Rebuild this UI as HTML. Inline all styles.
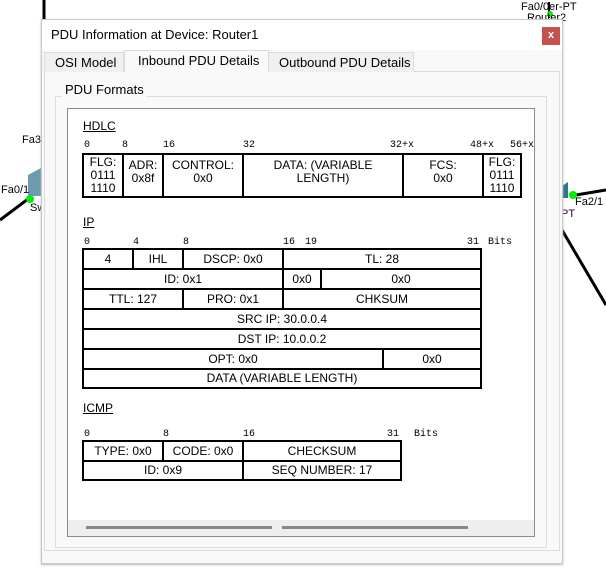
<!DOCTYPE html>
<html><head><style>
*{margin:0;padding:0;box-sizing:border-box}
body{width:606px;height:575px;background:#fff;position:relative;overflow:hidden;font-family:"Liberation Sans",sans-serif;font-size:12px;color:#000}
.a{position:absolute;white-space:nowrap}
.c{position:absolute;border:2px solid #000;display:flex;align-items:center;justify-content:center;text-align:center;line-height:13px;font-size:12px;white-space:nowrap}
.m{position:absolute;font-family:"Liberation Mono",monospace;font-size:10px}
.u{position:absolute;text-decoration:underline;font-size:12px}
</style></head><body>
<svg class="a" style="left:0;top:0" width="606" height="575">
<line x1="0" y1="220" x2="32" y2="196" stroke="#000" stroke-width="3"/>
<line x1="570" y1="196" x2="606" y2="190" stroke="#000" stroke-width="3"/>
<line x1="562" y1="230" x2="606" y2="305" stroke="#000" stroke-width="3"/>
<line x1="44" y1="0" x2="44" y2="20" stroke="#000" stroke-width="3"/>
<line x1="549" y1="2" x2="549" y2="18" stroke="#000" stroke-width="2"/>
<circle cx="30" cy="199" r="4" fill="#0e0"/>
<circle cx="573" cy="195" r="4" fill="#0e0"/>
<circle cx="550" cy="14" r="3" fill="#0e0"/>
<polygon points="28,175 41,168 41,196 28,196" fill="#6a9bb0"/>
<polygon points="562,186 568,182 568,198 562,198" fill="#2a7a8a"/>
</svg>
<div class="a" style="left:22px;top:134px;font-size:11px">Fa3</div>
<div class="a" style="left:1px;top:184px;font-size:11px">Fa0/1</div>
<div class="a" style="left:30px;top:202px;font-size:11px">Sw</div>
<div class="a" style="left:521px;top:1px;font-size:11px">Fa0/0er-PT</div>
<div class="a" style="left:527px;top:12px;font-size:11px">Router2</div>
<div class="a" style="left:575px;top:196px;font-size:11px">Fa2/1</div>
<div class="a" style="left:561px;top:208px;font-size:11px;color:#303">PT</div>
<div class="a" style="left:41px;top:19px;width:522px;height:545px;background:#f8f8f8;border:1px solid #c8c8c8;box-shadow:0 1px 2px #bbb"></div>
<div class="a" style="left:42px;top:20px;width:520px;height:30px;background:#fff"></div>
<div class="a" style="left:51px;top:27px;font-size:13px">PDU Information at Device: Router1</div>
<div class="a" style="left:542px;top:27px;width:18px;height:18px;background:#c75050;color:#fff;font-size:11px;text-align:center;line-height:17px;font-weight:bold">x</div>
<div class="a" style="left:44px;top:71px;width:516px;height:480px;border:1px solid #dcdcdc;background:#f9f9f9"></div>
<div class="a" style="left:44px;top:52px;width:80px;height:20px;border:1px solid #dcdcdc;border-bottom:none;background:#f0f0f0;font-size:13px;padding:2px 0 0 10px">OSI Model</div>
<div class="a" style="left:124px;top:50px;width:145px;height:22px;border:1px solid #dcdcdc;border-bottom:none;background:#f9f9f9;font-size:13px;padding:2px 0 0 13px">Inbound PDU Details</div>
<div class="a" style="left:268px;top:52px;width:146px;height:20px;border:1px solid #dcdcdc;border-bottom:none;background:#f0f0f0;font-size:13px;padding:2px 0 0 10px">Outbound PDU Details</div>
<div class="a" style="left:55px;top:96px;width:492px;height:452px;border:1px solid #dcdcdc"></div>
<div class="a" style="left:62px;top:82px;background:#f9f9f9;padding:0 3px;font-size:13px">PDU Formats</div>
<div class="a" style="left:67px;top:108px;width:468px;height:429px;background:#fff;border:1px solid #8a8a95"></div>
<div class="a" style="left:68px;top:520px;width:466px;height:16px;background:#eee"></div>
<div class="a" style="left:86px;top:526px;width:186px;height:3px;background:#888"></div>
<div class="a" style="left:282px;top:526px;width:186px;height:3px;background:#888"></div>
<div class="a" style="left:68px;top:109px;width:466px;height:411px;overflow:hidden">
<div style="position:absolute;left:-68px;top:-109px;width:606px;height:575px">
<div class="u" style="left:83px;top:119px">HDLC</div>
<div class="m" style="left:84px;top:140px">0</div><div class="m" style="left:122px;top:140px">8</div><div class="m" style="left:163px;top:140px">16</div><div class="m" style="left:243px;top:140px">32</div><div class="m" style="left:390px;top:140px">32+x</div><div class="m" style="left:470px;top:140px">48+x</div><div class="m" style="left:510px;top:140px">56+x</div>
<div class="c" style="left:82px;top:153px;width:42px;height:45px">FLG:<br>0111<br>1110</div>
<div class="c" style="left:122px;top:153px;width:42px;height:45px;align-items:flex-start;padding-top:4px">ADR:<br>0x8f</div>
<div class="c" style="left:162px;top:153px;width:82px;height:45px;align-items:flex-start;padding-top:4px">CONTROL:<br>0x0</div>
<div class="c" style="left:242px;top:153px;width:162px;height:45px;align-items:flex-start;padding-top:4px">DATA: (VARIABLE<br>LENGTH)</div>
<div class="c" style="left:402px;top:153px;width:82px;height:45px;align-items:flex-start;padding-top:4px">FCS:<br>0x0</div>
<div class="c" style="left:482px;top:153px;width:40px;height:45px">FLG:<br>0111<br>1110</div>
<div class="u" style="left:83px;top:215px">IP</div>
<div class="m" style="left:84px;top:237px">0</div><div class="m" style="left:133px;top:237px">4</div><div class="m" style="left:183px;top:237px">8</div><div class="m" style="left:283px;top:237px">16</div><div class="m" style="left:305px;top:237px">19</div><div class="m" style="left:467px;top:237px">31</div><div class="m" style="left:488px;top:237px">Bits</div>
<div class="c" style="left:82px;top:248px;width:52px;height:22px">4</div>
<div class="c" style="left:132px;top:248px;width:52px;height:22px">IHL</div>
<div class="c" style="left:182px;top:248px;width:102px;height:22px">DSCP: 0x0</div>
<div class="c" style="left:282px;top:248px;width:200px;height:22px">TL: 28</div>
<div class="c" style="left:82px;top:268px;width:202px;height:22px">ID: 0x1</div>
<div class="c" style="left:282px;top:268px;width:40px;height:22px">0x0</div>
<div class="c" style="left:320px;top:268px;width:162px;height:22px">0x0</div>
<div class="c" style="left:82px;top:288px;width:102px;height:22px">TTL: 127</div>
<div class="c" style="left:182px;top:288px;width:102px;height:22px">PRO: 0x1</div>
<div class="c" style="left:282px;top:288px;width:200px;height:22px">CHKSUM</div>
<div class="c" style="left:82px;top:308px;width:400px;height:22px">SRC IP: 30.0.0.4</div>
<div class="c" style="left:82px;top:328px;width:400px;height:22px">DST IP: 10.0.0.2</div>
<div class="c" style="left:82px;top:348px;width:302px;height:22px">OPT: 0x0</div>
<div class="c" style="left:382px;top:348px;width:100px;height:22px">0x0</div>
<div class="c" style="left:82px;top:368px;width:400px;height:21px">DATA (VARIABLE LENGTH)</div>
<div class="u" style="left:83px;top:401px">ICMP</div>
<div class="m" style="left:84px;top:429px">0</div><div class="m" style="left:163px;top:429px">8</div><div class="m" style="left:243px;top:429px">16</div><div class="m" style="left:387px;top:429px">31</div><div class="m" style="left:414px;top:429px">Bits</div>
<div class="c" style="left:82px;top:440px;width:82px;height:22px">TYPE: 0x0</div>
<div class="c" style="left:162px;top:440px;width:82px;height:22px">CODE: 0x0</div>
<div class="c" style="left:242px;top:440px;width:160px;height:22px">CHECKSUM</div>
<div class="c" style="left:82px;top:460px;width:162px;height:21px">ID: 0x9</div>
<div class="c" style="left:242px;top:460px;width:160px;height:21px">SEQ NUMBER: 17</div>
</div></div>
</body></html>
